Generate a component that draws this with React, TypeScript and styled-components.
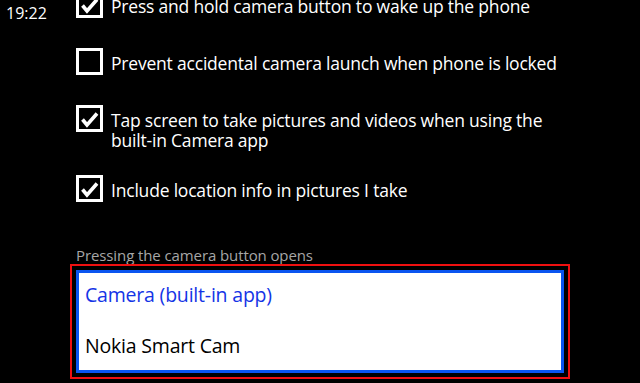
import * as React from "react"
import styled, { createGlobalStyle } from "styled-components"

const GlobalStyle = createGlobalStyle`
    html, body {
        margin: 0;
        padding: 0;
        background: #000;
    }
    body {
        width: 640px;
        height: 383px;
        overflow: hidden;
        font-family: "Open Sans", "Noto Sans", sans-serif;
        color: #fff;
    }
`

const Screen = styled.div`
    display: flex;
    width: 640px;
    height: 383px;
    overflow: hidden;
    background: #000;
`

const StatusColumn = styled.div`
    width: 70px;
    flex: none;
    padding: 3px 0 0 6px;
    box-sizing: border-box;
    font-size: 16px;
    line-height: 20px;
    color: #fff;
`

const Content = styled.div`
    width: 500px;
    flex: none;
    display: flex;
    flex-direction: column;
    /* page is scrolled, so the first option is cut off at the top */
    margin-top: -9px;
`

const OptionList = styled.div`
    display: flex;
    flex-direction: column;
    padding-left: 6px;
`

const CheckRow = styled.label`
    display: flex;
    align-items: flex-start;
    gap: 8px;
    margin-bottom: 20px;
`

const BoxSlot = styled.div`
    flex: none;
    height: 37px;
`

const Box = styled.div`
    width: 27px;
    height: 27px;
    box-sizing: border-box;
    border: 3px solid #fff;
    position: relative;

    svg {
        position: absolute;
        left: -3px;
        top: -3px;
    }
`

const CheckText = styled.div`
    padding: 5px 0;
    font-size: 17.5px;
    letter-spacing: -0.2px;
    line-height: 20px;
    white-space: nowrap;
    color: #fff;
`

const SectionLabel = styled.div`
    margin: 14px 0 0 6px;
    font-size: 15px;
    letter-spacing: -0.1px;
    line-height: 18px;
    color: #a6a6a6;
`

const Highlight = styled.div`
    border: 2px solid #f01010;
    padding: 4px;
`

const ListBox = styled.div`
    border: 3px solid #0a55f0;
    background: #fff;
    height: 97px;
    overflow: hidden;
`

const ListItem = styled.div<{ $selected?: boolean }>`
    padding: 9px 6px 16px;
    font-size: 19.5px;
    letter-spacing: -0.2px;
    line-height: 26px;
    color: ${p => (p.$selected ? "#1434e6" : "#000")};
`

const Check = () => (
    <svg width="27" height="27" viewBox="0 0 27 27">
        <path d="M6.5 14.5 L11 20 L21 8.5" fill="none" stroke="#fff" strokeWidth="3.6" strokeLinecap="butt" strokeLinejoin="miter" />
    </svg>
)

const CheckItem = ({ checked, children }: { checked: boolean; children: React.ReactNode }) => (
    <CheckRow>
        <BoxSlot>
            <Box>{checked && <Check />}</Box>
        </BoxSlot>
        <CheckText>{children}</CheckText>
    </CheckRow>
)

export default function App() {
    return (
        <>
            <GlobalStyle />
            <Screen>
                <StatusColumn>19:22</StatusColumn>
                <Content>
                    <OptionList>
                        <CheckItem checked>Press and hold camera button to wake up the phone</CheckItem>
                        <CheckItem checked={false}>Prevent accidental camera launch when phone is locked</CheckItem>
                        <CheckItem checked>
                            Tap screen to take pictures and videos when using the
                            <br />
                            built-in Camera app
                        </CheckItem>
                        <CheckItem checked>Include location info in pictures I take</CheckItem>
                    </OptionList>
                    <SectionLabel>Pressing the camera button opens</SectionLabel>
                    <Highlight>
                        <ListBox>
                            <ListItem $selected>Camera (built-in app)</ListItem>
                            <ListItem>Nokia Smart Cam</ListItem>
                        </ListBox>
                    </Highlight>
                </Content>
            </Screen>
        </>
    )
}
